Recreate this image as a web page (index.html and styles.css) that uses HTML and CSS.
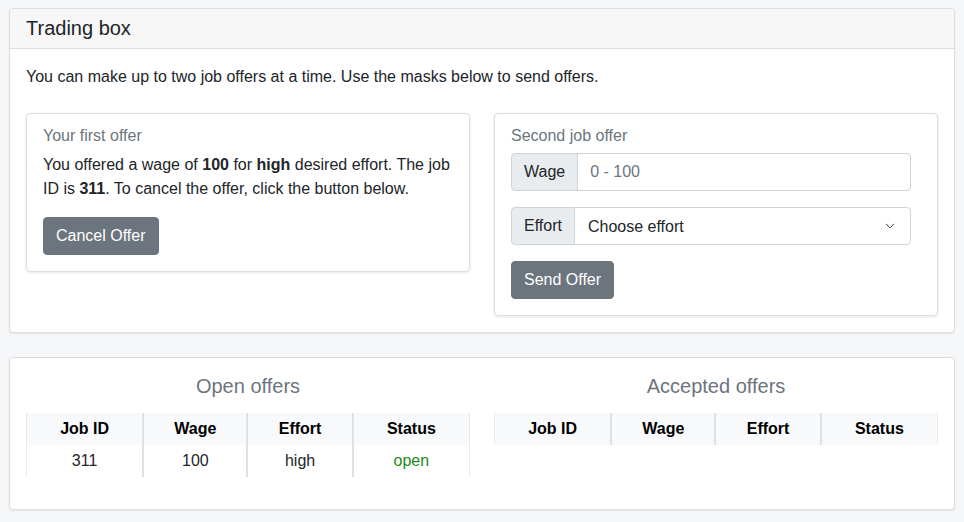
FILE: index.html
```html
<!DOCTYPE html>
<html lang="en">
<head>
<meta charset="utf-8">
<title>Trading box</title>
<link rel="stylesheet" href="styles.css">
</head>
<body>
<div class="page">
  <section class="card">
    <header class="card-header">Trading box</header>
    <div class="card-body">
      <p class="intro">You can make up to two job offers at a time. Use the masks below to send offers.</p>
      <div class="offers">
        <div class="offer-card">
          <div class="offer-title">Your first offer</div>
          <p class="offer-text">You offered a wage of <b>100</b> for <b>high</b> desired effort. The job ID is <b>311</b>. To cancel the offer, click the button below.</p>
          <button class="btn" type="button">Cancel Offer</button>
        </div>
        <div class="offer-card">
          <div class="offer-title">Second job offer</div>
          <div class="input-group">
            <span class="addon">Wage</span>
            <input class="field" type="text" placeholder="0 - 100">
          </div>
          <div class="input-group">
            <span class="addon">Effort</span>
            <select class="field select">
              <option>Choose effort</option>
              <option>low</option>
              <option>high</option>
            </select>
          </div>
          <button class="btn" type="button">Send Offer</button>
        </div>
      </div>
    </div>
  </section>

  <section class="card tables-card">
    <div class="tables">
      <div class="table-col">
        <h5 class="table-title">Open offers</h5>
        <table class="offer-table">
          <thead>
            <tr><th class="c1">Job ID</th><th class="c2">Wage</th><th class="c3">Effort</th><th class="c4">Status</th></tr>
          </thead>
          <tbody>
            <tr><td>311</td><td>100</td><td>high</td><td class="status-open">open</td></tr>
          </tbody>
        </table>
      </div>
      <div class="table-col">
        <h5 class="table-title">Accepted offers</h5>
        <table class="offer-table">
          <thead>
            <tr><th class="c1">Job ID</th><th class="c2">Wage</th><th class="c3">Effort</th><th class="c4">Status</th></tr>
          </thead>
          <tbody></tbody>
        </table>
      </div>
    </div>
  </section>
</div>
</body>
</html>
```

FILE: styles.css
```css
* { box-sizing: border-box; }

html, body {
  margin: 0;
  background: #f6f7f8;
  font-family: "Liberation Sans", Arial, sans-serif;
  font-size: 16px;
  line-height: 24px;
  color: #212529;
}

.page {
  padding: 8px 9px 16px 9px;
}

.card {
  background: #fff;
  border: 1px solid #dcdee0;
  border-radius: 4px;
  box-shadow: 0 1px 2px rgba(0,0,0,0.08);
}

.card-header {
  height: 40px;
  padding: 0 16px;
  background: #f7f7f7;
  border-bottom: 1px solid #dcdee0;
  border-radius: 4px 4px 0 0;
  font-size: 20px;
  line-height: 39px;
}

.card-body {
  padding: 16px;
}

.intro {
  margin: 0 0 24px;
}

.offers {
  display: grid;
  grid-template-columns: 1fr 1fr;
  column-gap: 24px;
  align-items: start;
}

.offer-card {
  border: 1px solid #dcdee0;
  border-radius: 4px;
  padding: 10px 16px 16px;
  box-shadow: 0 1px 3px rgba(0,0,0,0.10);
}

.offer-title {
  color: #6c757d;
  margin-bottom: 5px;
}

.offer-text {
  margin: 0 0 16px;
}

.btn {
  display: inline-block;
  background: #6c757d;
  color: #fff;
  border: 1px solid #6c757d;
  border-radius: 4px;
  padding: 6px 12px;
  font-family: inherit;
  font-size: 16px;
  line-height: 24px;
}

.input-group {
  display: flex;
  width: 400px;
  height: 38px;
  margin-bottom: 16px;
}

.addon {
  display: flex;
  align-items: center;
  padding: 0 12px;
  background: #e9ecef;
  border: 1px solid #ced4da;
  border-radius: 4px 0 0 4px;
  color: #212529;
}

.field {
  flex: 1;
  min-width: 0;
  height: 38px;
  margin-left: -1px;
  border: 1px solid #ced4da;
  border-radius: 0 4px 4px 0;
  padding: 6px 12px;
  font-family: inherit;
  font-size: 16px;
  color: #212529;
  background: #fff;
}
.field::placeholder { color: #6c757d; }

.select {
  appearance: none;
  -webkit-appearance: none;
  padding-left: 13px;
  background-image: url("data:image/svg+xml,%3Csvg xmlns='http://www.w3.org/2000/svg' viewBox='0 0 16 16'%3E%3Cpath fill='none' stroke='%23343a40' stroke-linecap='round' stroke-linejoin='round' stroke-width='1.6' d='M2 5l6 6 6-6'/%3E%3C/svg%3E");
  background-repeat: no-repeat;
  background-position: right 14px center;
  background-size: 12px 10px;
}

.tables-card {
  margin-top: 24px;
  padding: 16px 16px 32px;
}

.tables {
  display: grid;
  grid-template-columns: 1fr 1fr;
  column-gap: 24px;
}

.table-title {
  margin: 0 0 15px;
  font-size: 20px;
  font-weight: normal;
  line-height: 24px;
  text-align: center;
  color: #6c757d;
}

.offer-table {
  width: 100%;
  table-layout: fixed;
  border-collapse: separate;
  border-spacing: 0;
}

.offer-table th,
.offer-table td {
  height: 32px;
  padding: 0 4px;
  text-align: center;
  border-left: 1px solid #dee2e6;
  border-right: 1px solid #dee2e6;
  line-height: 24px;
}
.offer-table th:first-child,
.offer-table td:first-child { border-left-color: #e9ecef; }
.offer-table th:last-child,
.offer-table td:last-child { border-right-color: #e9ecef; }

.offer-table th {
  background: #f8f9fa;
  font-weight: bold;
  color: #000;
}

.c1 { width: 117px; }
.c2 { width: 104px; }
.c3 { width: 105px; }
.c4 { width: 117px; }

.status-open { color: #1a8a1a; }
```
